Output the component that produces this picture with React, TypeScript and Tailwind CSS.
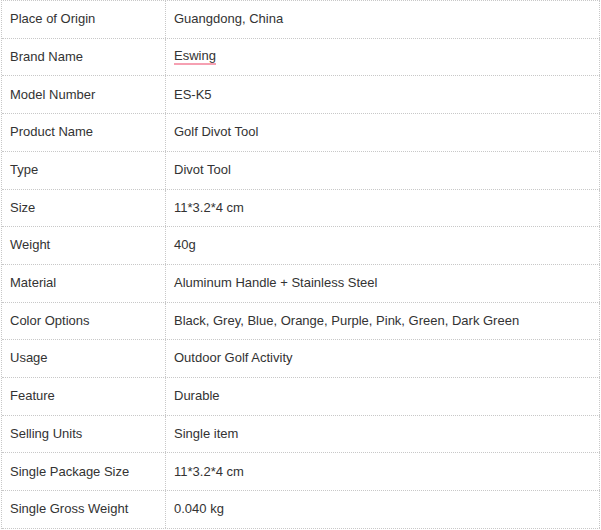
const rows: [string, string][] = [
  ["Place of Origin", "Guangdong, China"],
  ["Brand Name", "Eswing"],
  ["Model Number", "ES-K5"],
  ["Product Name", "Golf Divot Tool"],
  ["Type", "Divot Tool"],
  ["Size", "11*3.2*4 cm"],
  ["Weight", "40g"],
  ["Material", "Aluminum Handle + Stainless Steel"],
  ["Color Options", "Black, Grey, Blue, Orange, Purple, Pink, Green, Dark Green"],
  ["Usage", "Outdoor Golf Activity"],
  ["Feature", "Durable"],
  ["Selling Units", "Single item"],
  ["Single Package Size", "11*3.2*4 cm"],
  ["Single Gross Weight", "0.040 kg"],
];

export default function App() {
  return (
    <div className="bg-white w-[601px] h-[530px] pl-px" style={{ fontFamily: '"Liberation Sans", Arial, sans-serif' }}>
      <div className="w-[599px] border-t border-l border-dotted border-[#c8c8c8] flex flex-col">
        {rows.map(([k, v]) => (
          <div key={k} className="flex h-[37.714px] border-b border-dotted border-[#c8c8c8] text-[13px] text-[#333]">
            <div className="w-[164px] shrink-0 border-r border-dotted border-[#c8c8c8] pl-2 pb-px flex items-center">{k}</div>
            <div className="flex-1 border-r border-dotted border-[#c8c8c8] pl-2 pb-px flex items-center">
              {k === "Brand Name" ? (
                <span className="border-b-2 border-[#f6a0b2] leading-[15px]">{v}</span>
              ) : (
                v
              )}
            </div>
          </div>
        ))}
      </div>
    </div>
  );
}
